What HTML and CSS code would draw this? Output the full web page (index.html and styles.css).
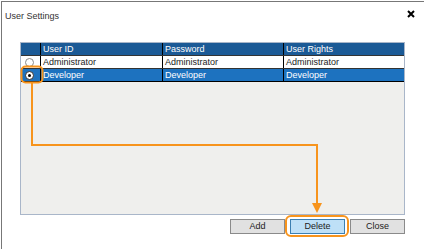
FILE: index.html
```html
<!DOCTYPE html>
<html>
<head>
<meta charset="utf-8">
<link rel="stylesheet" href="styles.css">
</head>
<body>
<div class="dialog">
  <div class="titlebar">
    <span class="title">User Settings</span>
    <svg class="close" width="8" height="8" viewBox="0 0 8 8"><path d="M1 1 L7 7 M7 1 L1 7" stroke="#000" stroke-width="2"/></svg>
  </div>
  <div class="content">
    <div class="table">
      <div class="row head">
        <div class="cell sel"></div>
        <div class="cell">User ID</div>
        <div class="cell">Password</div>
        <div class="cell last">User Rights</div>
      </div>
      <div class="row data">
        <div class="cell sel"><span class="radio"></span></div>
        <div class="cell">Administrator</div>
        <div class="cell">Administrator</div>
        <div class="cell last">Administrator</div>
      </div>
      <div class="row data active">
        <div class="cell sel"><span class="radio on"></span></div>
        <div class="cell">Developer</div>
        <div class="cell">Developer</div>
        <div class="cell last">Developer</div>
      </div>
    </div>
    <div class="buttons">
      <button class="btn">Add</button>
      <button class="btn primary">Delete</button>
      <button class="btn">Close</button>
    </div>
  </div>
</div>
<svg class="overlay" width="424" height="250" viewBox="0 0 424 250">
  <rect x="21.5" y="66.5" width="21" height="16" rx="4" fill="none" stroke="#f7941d" stroke-width="2"/>
  <path d="M32 83 V145 H317 V204" fill="none" stroke="#f7941d" stroke-width="2"/>
  <polygon points="312,203 322,203 317,213" fill="#f7941d"/>
  <rect x="286" y="216" width="62" height="20" rx="5" fill="none" stroke="#f7941d" stroke-width="2"/>
</svg>
</body>
</html>
```
FILE: styles.css
```css
html, body {
  margin: 0;
  padding: 0;
  background: #fff;
}
body {
  width: 424px;
  height: 250px;
  overflow: hidden;
  font-family: "Liberation Sans", Arial, sans-serif;
  font-size: 9px;
  color: #000;
}
.dialog {
  margin: 1px 0 0 1px;
  border-top: 1px solid #777;
  border-left: 1px solid #777;
  height: 248px;
  box-sizing: border-box;
}
.titlebar {
  display: flex;
  justify-content: space-between;
  align-items: flex-start;
  height: 40px;
  box-sizing: border-box;
  padding: 8px 9px 0 3px;
}
.title {
  font-size: 9px;
  line-height: 12px;
  color: #333;
}
.content {
  padding-left: 18px;
}
.table {
  width: 385px;
  height: 173px;
  box-sizing: border-box;
  border: 1px solid #a9b6c9;
  background: #efefed;
}
.row {
  display: grid;
  grid-template-columns: 20px 122px 121px 120px;
  height: 12px;
  line-height: 11px;
}
.cell {
  border-right: 1px solid #000;
  padding-left: 2px;
  white-space: nowrap;
  overflow: hidden;
  display: flex;
  align-items: center;
}
.cell.last {
  border-right: none;
}
.head {
  background: #1b5a96;
  color: #fff;
}
.data {
  background: #fff;
  border-top: 1px solid #333;
  color: #222;
}
.data.active {
  background: #1d72bf;
  color: #fff;
  border-bottom: 1px solid #000;
}
.cell.sel {
  padding-left: 4px;
}
.radio {
  display: block;
  width: 9px;
  height: 9px;
  box-sizing: border-box;
  border: 1px solid #8a8a8a;
  border-radius: 50%;
  background: #fff;
  position: relative;
}
.radio.on {
  border-color: #333;
}
.radio.on::after {
  content: "";
  position: absolute;
  left: 2px;
  top: 2px;
  width: 3px;
  height: 3px;
  border-radius: 50%;
  background: #000;
}
.buttons {
  width: 385px;
  display: flex;
  justify-content: flex-end;
  gap: 5px;
  margin-top: 4px;
}
.btn {
  width: 55px;
  height: 15px;
  box-sizing: border-box;
  border: 1px solid #8a8a8a;
  background: #e1e1e1;
  font-family: "Liberation Sans", Arial, sans-serif;
  font-size: 9px;
  color: #222;
  padding: 0;
  line-height: 13px;
}
.btn.primary {
  background: #bee0f7;
  border-color: #3c7fb1;
}
.overlay {
  position: absolute;
  top: 0;
  left: 0;
  pointer-events: none;
}
```
